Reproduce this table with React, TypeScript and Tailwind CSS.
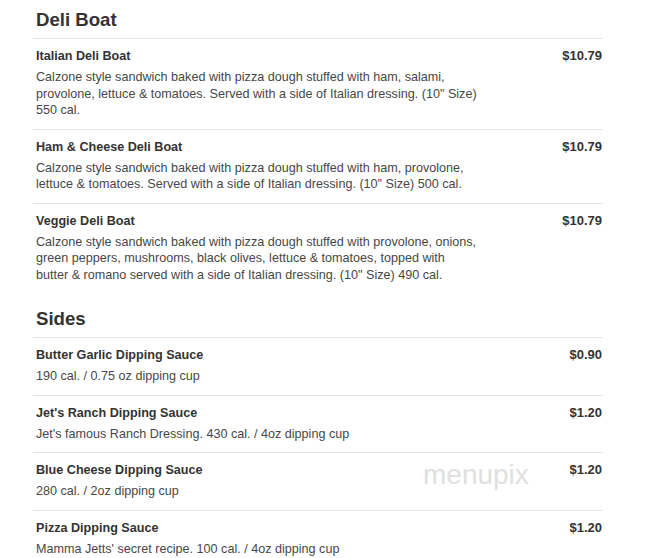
type Item = {
  name: string;
  desc: string;
  price: string;
};

const deliBoats: Item[] = [
  {
    name: "Italian Deli Boat",
    desc: 'Calzone style sandwich baked with pizza dough stuffed with ham, salami, provolone, lettuce & tomatoes. Served with a side of Italian dressing. (10" Size) 550 cal.',
    price: "$10.79",
  },
  {
    name: "Ham & Cheese Deli Boat",
    desc: 'Calzone style sandwich baked with pizza dough stuffed with ham, provolone, lettuce & tomatoes. Served with a side of Italian dressing. (10" Size) 500 cal.',
    price: "$10.79",
  },
  {
    name: "Veggie Deli Boat",
    desc: 'Calzone style sandwich baked with pizza dough stuffed with provolone, onions, green peppers, mushrooms, black olives, lettuce & tomatoes, topped with butter & romano served with a side of Italian dressing. (10" Size) 490 cal.',
    price: "$10.79",
  },
];

const sides: Item[] = [
  { name: "Butter Garlic Dipping Sauce", desc: "190 cal. / 0.75 oz dipping cup", price: "$0.90" },
  { name: "Jet's Ranch Dipping Sauce", desc: "Jet's famous Ranch Dressing. 430 cal. / 4oz dipping cup", price: "$1.20" },
  { name: "Blue Cheese Dipping Sauce", desc: "280 cal. / 2oz dipping cup", price: "$1.20" },
  { name: "Pizza Dipping Sauce", desc: "Mamma Jetts' secret recipe. 100 cal. / 4oz dipping cup", price: "$1.20" },
];

function MenuRow({ item }: { item: Item }) {
  return (
    <div className="flex justify-between border-t border-[#e6e6e6] pt-[8px] pb-[10px] pl-[3px] pr-[1px]">
      <div className="w-[444px]">
        <h3 className="text-[12.6px] leading-[18px] font-bold text-[#333]">{item.name}</h3>
        <p className="mt-[4px] text-[12.6px] leading-[16.5px] text-[#474747]">{item.desc}</p>
      </div>
      <span className="text-[13px] leading-[18px] font-bold text-[#333]">{item.price}</span>
    </div>
  );
}

function Section({ title, items, first }: { title: string; items: Item[]; first?: boolean }) {
  return (
    <section className={first ? "" : "mt-[14px]"}>
      <h2 className="pl-[3px] mb-[6px] text-[18.6px] leading-[24px] font-bold text-[#333]">{title}</h2>
      {items.map((item) => (
        <MenuRow key={item.name} item={item} />
      ))}
    </section>
  );
}

export default function App() {
  return (
    <div className="relative w-[656px] h-[558px] overflow-hidden bg-white font-['Liberation_Sans',Arial,sans-serif]">
      <div className="ml-[33px] w-[570px] pt-[8px]">
        <Section title="Deli Boat" items={deliBoats} first />
        <Section title="Sides" items={sides} />
      </div>

      {/* watermark */}
      <span className="absolute left-[423px] top-[459px] text-[28px] leading-[32px] text-[#e0e0e0] pointer-events-none">
        menupix
      </span>
    </div>
  );
}
